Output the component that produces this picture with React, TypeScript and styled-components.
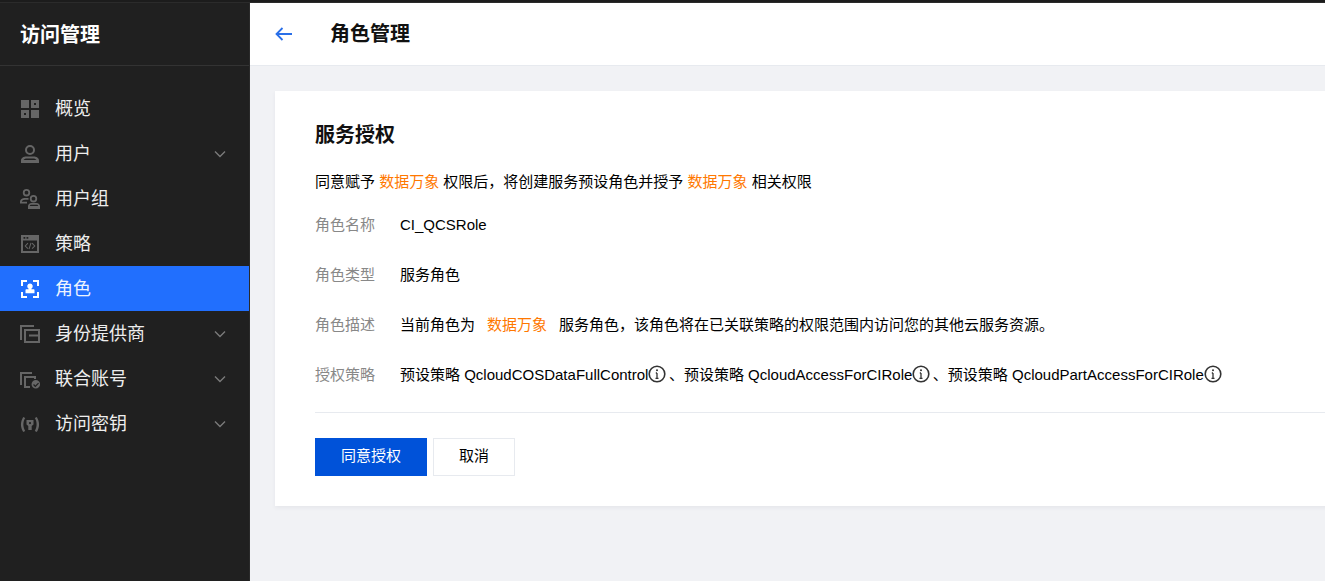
import React from "react";
import styled, { createGlobalStyle } from "styled-components";

const Global = createGlobalStyle`
  html, body { margin: 0; padding: 0; height: 100%; overflow: hidden; background: #f1f2f5; }
  #root { height: 100%; }
  * { box-sizing: border-box; }
  body { font-family: "Liberation Sans", "Noto Sans CJK SC", sans-serif; font-size: 15px; color: #000; }
`;

const Page = styled.div`
  display: flex;
  flex-direction: column;
  height: 581px;
  width: 1325px;
  overflow: hidden;
`;
const TopStrip = styled.div`
  height: 3px;
  flex: none;
  background: #1c1c1c;
  border-bottom: 1px solid #2b2b2b;
`;
const Body = styled.div`
  display: flex;
  flex: 1;
  min-height: 0;
`;
const Sidebar = styled.aside`
  width: 250px;
  flex: none;
  background: #202020;
  border-right: 1px solid #2a2a2a;
`;
const Brand = styled.div`
  height: 63px;
  border-bottom: 1px solid #333;
  padding: 0 20px 2px;
  display: flex;
  align-items: center;
  color: #fff;
  font-size: 20px;
  font-weight: 700;
`;
const Nav = styled.nav`
  padding-top: 20px;
`;
const NavItem = styled.div<{ $active?: boolean }>`
  height: 45px;
  display: flex;
  align-items: center;
  padding: 0 20px;
  gap: 15px;
  font-size: 18px;
  color: #fff;
  background: ${(p) => (p.$active ? "#216ffe" : "transparent")};
  svg.icon { flex: none; color: ${(p) => (p.$active ? "#fff" : "#666")}; }
`;
const NavLabel = styled.span`
  flex: 1;
  color: inherit;
  opacity: 0.92;
  line-height: 22px;
`;
const Main = styled.main`
  flex: 1;
  min-width: 0;
  display: flex;
  flex-direction: column;
`;
const Header = styled.header`
  height: 63px;
  flex: none;
  background: #fff;
  border-bottom: 1px solid #e7eaef;
  display: flex;
  align-items: center;
  padding-left: 25px;
`;
const BackButton = styled.span`
  display: inline-flex;
  width: 55px;
  color: #2a6fe8;
`;
const PageTitle = styled.h1`
  margin: 0;
  font-size: 20px;
  line-height: 28px;
  font-weight: 700;
  color: #111;
`;
const Content = styled.div`
  padding: 25px 0 0 25px;
  flex: 1;
`;
const Card = styled.section`
  width: 1100px;
  height: 415px;
  background: #fff;
  box-shadow: 0 2px 4px rgba(54, 58, 80, 0.06);
  padding: 30px 40px;
`;
const CardTitle = styled.h2`
  margin: 0 0 23px;
  font-size: 20px;
  line-height: 28px;
  font-weight: 700;
  color: #111;
`;
const Lead = styled.p`
  margin: 0 0 22px;
  line-height: 20px;
  font-size: 15px;
`;
const Accent = styled.span`
  color: #ff7800;
`;
const InfoRow = styled.div`
  display: flex;
  height: 50px;
  line-height: 22px;
  font-size: 15px;
`;
const InfoLabel = styled.span`
  width: 85px;
  flex: none;
  color: #888;
`;
const InfoValue = styled.span`
  display: flex;
  align-items: flex-start;
  white-space: pre;
  svg { flex: none; margin: 1px 2.5px 0 0; }
`;
const Spaced = styled(Accent)`
  padding: 0 12px;
`;
const Divider = styled.hr`
  margin: -2px 0 25px;
  border: 0;
  border-top: 1px solid #e7eaef;
`;
const Actions = styled.div`
  display: flex;
  gap: 6px;
`;
const Primary = styled.button`
  width: 112px;
  height: 38px;
  border: 0;
  background: #0052d9;
  color: #fff;
  font: inherit;
  font-size: 15px;
  line-height: 22px;
  padding: 0 0 3px;
`;
const Secondary = styled.button`
  width: 82px;
  height: 38px;
  border: 1px solid #e7eaef;
  background: #fff;
  color: #000;
  font: inherit;
  font-size: 15px;
  line-height: 22px;
  padding: 0 0 3px;
`;

const Ic = ({ children }: { children: React.ReactNode }) => (
  <svg className="icon" width="20" height="20" viewBox="0 0 20 20" fill="currentColor">{children}</svg>
);

const IconGrid = () => (
  <Ic>
    <path fillRule="evenodd" d="M1 1h8v8H1zM11 1h8v8h-8zM14 4v2h2V4zM1 11h8v8H1zM4 14v2h2v-2zM11 11h8v8h-8z" />
  </Ic>
);
const IconUser = () => (
  <Ic>
    <path fillRule="evenodd" d="M10 1a5 5 0 1 1 0 10 5 5 0 0 1 0-10zm0 2a3 3 0 1 0 0 6 3 3 0 0 0 0-6z" />
    <path fillRule="evenodd" d="M1 19v-2.500C1 14 3.500 12.500 6.500 12.500h7c3 0 5.500 1.500 5.500 4V19zm2.500-3h13c-.5-.8-1.800-1.500-3.500-1.500H7c-1.700 0-3 .7-3.500 1.500z" />
  </Ic>
);
const IconGroup = () => (
  <Ic>
    <path fillRule="evenodd" d="M6.500 0a3.700 3.700 0 1 1 0 7.400 3.700 3.700 0 0 1 0-7.400zm0 1.800a1.900 1.900 0 1 0 0 3.800 1.900 1.900 0 0 0 0-3.800z" />
    <path d="M0 14.500v-1.800C0 10.400 2.500 9 5 9h3.500v1.800H5c-1.500 0-3.200.7-3.200 2h5.200v1.700z" />
    <path fillRule="evenodd" d="M13.500 6a3.700 3.700 0 1 1 0 7.400 3.700 3.700 0 0 1 0-7.400zm0 1.800a1.900 1.900 0 1 0 0 3.800 1.900 1.900 0 0 0 0-3.800z" />
    <path fillRule="evenodd" d="M8 20v-3c0-1.500 1.500-3 3.500-3h5c2 0 3.500 1.500 3.500 3v3zm1.800-3h8.400c-.1-.7-.8-1.200-1.700-1.200h-5c-.9 0-1.600.5-1.700 1.200z" />
  </Ic>
);
const IconPolicy = () => (
  <Ic>
    <path fillRule="evenodd" d="M1 1h18v18H1zM3 6.500V17h14V6.500zM3.500 3v1.800h1.800V3zM6.500 3v1.800h1.800V3z" />
    <path d="M8.300 9.500l-2.400 2.400 2.400 2.400-.7.700L4.500 11.900l3.100-3.100zM11.700 9.500l2.400 2.400-2.400 2.400.7.700 3.100-3.100-3.100-3.100zM10.500 8.700l1 .2-2 6.300-1-.2z" />
  </Ic>
);
const IconRole = () => (
  <Ic>
    <path d="M1 1h6v2H3v4H1zM13 1h6v6h-2V3h-4zM1 13h2v4h4v2H1zM17 13h2v6h-6v-2h4z" />
    <path fillRule="evenodd" d="M10 4.500a2.800 2.800 0 0 1 1.400 5.200l-.1.600h2.200c.6 0 1 .4 1 1v3H5.500v-3c0-.6.4-1 1-1h2.200l-.1-.6A2.800 2.800 0 0 1 10 4.500z" />
  </Ic>
);
const IconProvider = () => (
  <Ic>
    <path d="M0 1h14v2H2v13H0z" />
    <path fillRule="evenodd" d="M4 5h16v14H4zM6 7v10h12V7z" />
    <path d="M9 10.500h9v2H9z" />
  </Ic>
);
const IconFederated = () => (
  <Ic>
    <path d="M0 3h12v2H2v11H0z" />
    <path d="M4 7h12v3h-2V9H6v8h4v2H4z" />
    <path fillRule="evenodd" d="M15.800 11a4.200 4.200 0 1 1 0 8.500 4.200 4.200 0 0 1 0-8.500zm2.300 2.700l-2.800 2.700-1.300-1.300-.9.900 2.200 2.200 3.700-3.600z" />
  </Ic>
);
const IconKey = () => (
  <Ic>
    <path d="M3.200 3C.2 8 .2 13 3.200 18l2-1.100C2.800 13 2.800 8 5.200 4.100zM16.800 3c3 5 3 10 0 15l-2-1.100c2.400-3.900 2.400-8.900 0-12.800z" />
    <path fillRule="evenodd" d="M6.500 6h7v4.500l-1.800 1.500v4H8.300v-4L6.500 10.500zM10 8a1.100 1.100 0 1 0 0 2.200A1.100 1.100 0 0 0 10 8z" />
  </Ic>
);
const Chevron = () => (
  <svg width="12" height="8" viewBox="0 0 12 8" fill="none" stroke="#7a7a7a" strokeWidth="1.400" style={{ marginRight: 3 }}>
    <path d="M1 1.500l5 5 5-5" />
  </svg>
);
const Info = () => (
  <svg width="18" height="18" viewBox="0 0 18 18" fill="none" stroke="#333">
    <circle cx="9" cy="9" r="7.800" strokeWidth="1.600" />
    <path d="M9 8v5M7.500 13.300h3M7.800 8h1.200" strokeWidth="1.300" />
    <circle cx="9" cy="5.300" r="1" fill="#333" stroke="none" />
  </svg>
);
const Back = () => (
  <svg width="18" height="14" viewBox="0 0 18 14" fill="none" stroke="currentColor" strokeWidth="1.800">
    <path d="M1.500 7H17M7.500 1L1.500 7l6 6" />
  </svg>
);

const items = [
  { label: "概览", icon: <IconGrid /> },
  { label: "用户", icon: <IconUser />, more: true },
  { label: "用户组", icon: <IconGroup /> },
  { label: "策略", icon: <IconPolicy /> },
  { label: "角色", icon: <IconRole />, active: true },
  { label: "身份提供商", icon: <IconProvider />, more: true },
  { label: "联合账号", icon: <IconFederated />, more: true },
  { label: "访问密钥", icon: <IconKey />, more: true },
];

export default function App() {
  return (
    <Page>
      <Global />
      <TopStrip />
      <Body>
        <Sidebar>
          <Brand>访问管理</Brand>
          <Nav>
            {items.map((it) => (
              <NavItem key={it.label} $active={it.active}>
                {it.icon}
                <NavLabel>{it.label}</NavLabel>
                {it.more && <Chevron />}
              </NavItem>
            ))}
          </Nav>
        </Sidebar>
        <Main>
          <Header>
            <BackButton><Back /></BackButton>
            <PageTitle>角色管理</PageTitle>
          </Header>
          <Content>
            <Card>
              <CardTitle>服务授权</CardTitle>
              <Lead>同意赋予 <Accent>数据万象</Accent> 权限后，将创建服务预设角色并授予 <Accent>数据万象</Accent> 相关权限</Lead>
              <InfoRow>
                <InfoLabel>角色名称</InfoLabel>
                <InfoValue>CI_QCSRole</InfoValue>
              </InfoRow>
              <InfoRow>
                <InfoLabel>角色类型</InfoLabel>
                <InfoValue>服务角色</InfoValue>
              </InfoRow>
              <InfoRow>
                <InfoLabel>角色描述</InfoLabel>
                <InfoValue>当前角色为<Spaced>数据万象</Spaced>服务角色，该角色将在已关联策略的权限范围内访问您的其他云服务资源。</InfoValue>
              </InfoRow>
              <InfoRow>
                <InfoLabel>授权策略</InfoLabel>
                <InfoValue>预设策略 QcloudCOSDataFullControl<Info />、预设策略 QcloudAccessForCIRole<Info />、预设策略 QcloudPartAccessForCIRole<Info /></InfoValue>
              </InfoRow>
              <Divider />
              <Actions>
                <Primary>同意授权</Primary>
                <Secondary>取消</Secondary>
              </Actions>
            </Card>
          </Content>
        </Main>
      </Body>
    </Page>
  );
}
